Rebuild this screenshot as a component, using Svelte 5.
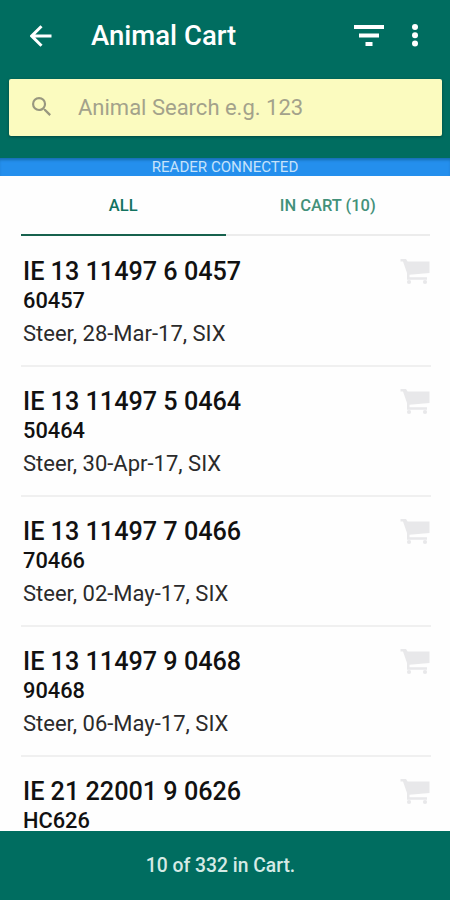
<script lang="ts">
	const animals = [
		{ tag: 'IE 13 11497 6 0457', code: '60457', details: 'Steer, 28-Mar-17, SIX' },
		{ tag: 'IE 13 11497 5 0464', code: '50464', details: 'Steer, 30-Apr-17, SIX' },
		{ tag: 'IE 13 11497 7 0466', code: '70466', details: 'Steer, 02-May-17, SIX' },
		{ tag: 'IE 13 11497 9 0468', code: '90468', details: 'Steer, 06-May-17, SIX' },
		{ tag: 'IE 21 22001 9 0626', code: 'HC626', details: '' }
	];
	const tabs = ['ALL', 'IN CART (10)'];

	let activeTab = 0;
	let search = '';
</script>

<svelte:head>
	<title>Animal Cart</title>
</svelte:head>

<div class="screen">
	<header>
		<div class="toolbar">
			<button class="back" aria-label="Back">
				<svg width="22" height="22" viewBox="0 0 22 22">
					<path d="M21.5 11H2M11.5 1.2L1.7 11l9.8 9.8" fill="none" stroke="#fff" stroke-width="3" />
				</svg>
			</button>
			<h1>Animal Cart</h1>
			<button aria-label="Filter">
				<svg width="30" height="21" viewBox="0 0 30 21">
					<path d="M0 0h30v4H0zM5 8.5h20v4H5zM11.5 17h7v4h-7z" fill="#fff" />
				</svg>
			</button>
			<button class="more" aria-label="More options">
				<svg width="6" height="23" viewBox="0 0 6 23">
					<circle cx="3" cy="3" r="3" fill="#fff" />
					<circle cx="3" cy="11.3" r="3" fill="#fff" />
					<circle cx="3" cy="19.6" r="3" fill="#fff" />
				</svg>
			</button>
		</div>
		<label class="search">
			<svg width="19" height="19" viewBox="3 3 17.5 17.5">
				<path
					d="M15.5 14h-.79l-.28-.27A6.47 6.47 0 0 0 16 9.5 6.5 6.5 0 1 0 9.5 16c1.61 0 3.09-.59 4.23-1.57l.27.28v.79l5 4.99L20.49 19l-4.99-5zm-6 0a4.5 4.5 0 1 1 0-9 4.5 4.5 0 0 1 0 9z"
					fill="#98977f"
				/>
			</svg>
			<input type="text" placeholder="Animal Search e.g. 123" bind:value={search} />
		</label>
	</header>

	<div class="reader">READER CONNECTED</div>

	<nav>
		{#each tabs as tab, index}
			<button class:active={activeTab === index} on:click={() => (activeTab = index)}>{tab}</button>
		{/each}
	</nav>

	<main>
		{#each animals as animal}
			<div class="animal">
				<div>
					<h2>{animal.tag}</h2>
					<h3>{animal.code}</h3>
					<p>{animal.details}</p>
				</div>
				<svg width="30" height="26" viewBox="0 0 30 26">
					<path d="M.5 0h5.5l1.6 2.5H29.5V14L9.5 15.8v2.4H27v2.6H7V14L3 2.6H.5z" fill="#e8e8ea" />
					<circle cx="9" cy="23" r="2.1" fill="#e8e8ea" />
					<circle cx="25" cy="23" r="2.1" fill="#e8e8ea" />
				</svg>
			</div>
		{/each}
	</main>

	<footer>10 of 332 in Cart.</footer>
</div>

<style>
	:global(body) {
		margin: 0;
	}

	.screen {
		display: flex;
		flex-direction: column;
		height: 900px;
		overflow: hidden;
		background: #fefefe;
		font-family: Roboto, sans-serif;
	}

	button {
		display: flex;
		padding: 0;
		border: 0;
		background: none;
		font-family: inherit;
	}

	header {
		flex: none;
		box-sizing: border-box;
		height: 158px;
		background: #006d60;
	}

	.toolbar {
		display: flex;
		align-items: center;
		height: 71px;
		padding: 0 32px 0 30px;
	}

	h1 {
		flex: 1;
		margin: 0 0 0 39px;
		color: #fff;
		font-size: 27.5px;
		font-weight: 500;
		line-height: 34px;
	}

	.more {
		margin-left: 28px;
	}

	.search {
		display: flex;
		align-items: center;
		box-sizing: border-box;
		height: 57px;
		margin: 8px 8px 0 9px;
		padding: 0 0 2px 23px;
		border-radius: 2px;
		background: #fbfbbf;
		box-shadow: 0 1px 3px rgba(0, 0, 0, 0.35);
	}

	input {
		flex: 1;
		min-width: 0;
		margin-left: 27px;
		padding: 1px 0 0;
		border: 0;
		outline: 0;
		background: none;
		font-family: inherit;
		font-size: 22px;
	}

	input::placeholder {
		color: #a3a28b;
	}

	.reader {
		flex: none;
		height: 18px;
		background: #248fed;
		box-shadow: inset 0 3px 3px -1px rgba(0, 60, 90, 0.4);
		color: #c6e2fa;
		font-size: 15.1px;
		line-height: 18px;
		text-align: center;
	}

	nav {
		display: flex;
		flex: none;
		height: 60px;
		margin: 0 20px 0 21px;
	}

	nav button {
		flex: 1;
		align-items: center;
		justify-content: center;
		padding-top: 1px;
		border-bottom: 2px solid #ececec;
		color: #43917a;
		font-size: 16.5px;
		font-weight: 500;
	}

	nav button.active {
		border-color: #17624e;
		color: #137360;
	}

	main {
		flex: 1;
		min-height: 0;
		margin: 0 19px 0 21px;
		padding-top: 1px;
		overflow: hidden;
	}

	.animal {
		display: flex;
		justify-content: space-between;
		box-sizing: border-box;
		height: 130px;
		padding: 19px 1px 0 2px;
		border-bottom: 2px solid #f0f0f0;
	}

	.animal svg {
		margin-top: 3px;
	}

	h2,
	h3,
	p {
		margin: 0;
		color: #111;
	}

	h2 {
		font-size: 25.2px;
		font-weight: 500;
		line-height: 31px;
	}

	h3 {
		margin-top: 4px;
		font-size: 21.8px;
		font-weight: 500;
		line-height: 20px;
	}

	p {
		margin-top: 8px;
		color: #2b2b2b;
		font-size: 22px;
		line-height: 30px;
	}

	footer {
		flex: none;
		box-sizing: border-box;
		height: 69px;
		padding-right: 9px;
		background: #006d60;
		color: #d5eae5;
		font-size: 19.3px;
		font-weight: 500;
		line-height: 70px;
		text-align: center;
	}
</style>
